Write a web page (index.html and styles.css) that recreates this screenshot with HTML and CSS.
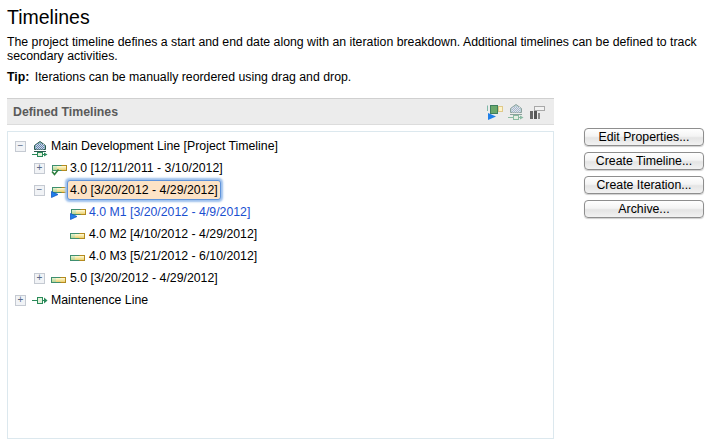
FILE: index.html
```html
<!DOCTYPE html>
<html lang="en">
<head>
<meta charset="utf-8">
<title>Timelines</title>
<link rel="stylesheet" href="styles.css">
</head>
<body>
<svg class="defs" width="0" height="0" aria-hidden="true">
  <defs>
    <linearGradient id="bar" x1="0" y1="0" x2="0" y2="1">
      <stop offset="0" stop-color="#fffbd8"/>
      <stop offset="1" stop-color="#ead070"/>
    </linearGradient>
    <linearGradient id="barg" x1="0" y1="0" x2="0" y2="1">
      <stop offset="0" stop-color="#e8f5da"/>
      <stop offset="1" stop-color="#b4d088"/>
    </linearGradient>
    <symbol id="iter" viewBox="0 0 16 16">
      <rect x="0.5" y="7.5" width="14" height="5" fill="url(#barg)" stroke="#3f8f6f"/>
      <rect x="5" y="8" width="9" height="4" fill="url(#bar)"/>
      <path d="M9.500 7.500H14.500V12.500H9.500" fill="none" stroke="#b98a1c"/>
    </symbol>
    <symbol id="iter-up" viewBox="0 0 16 16">
      <rect x="1.500" y="5.500" width="14" height="5" fill="url(#barg)" stroke="#3f8f6f"/>
      <rect x="6" y="6" width="9" height="4" fill="url(#bar)"/>
      <path d="M10.500 5.500H15.500V10.500H10.500" fill="none" stroke="#b98a1c"/>
    </symbol>
    <symbol id="play" viewBox="0 0 16 16">
      <path d="M0.500 9.500L7 12.500L0.500 15.500Z" fill="#1f7fe8" stroke="#1458c8" stroke-width="0.800"/>
    </symbol>
    <symbol id="check" viewBox="0 0 16 16">
      <path d="M1 11.500L3.500 14.500L7.500 9.500" fill="none" stroke="#2f7f3f" stroke-width="1.600"/>
    </symbol>
    <symbol id="line" viewBox="0 0 16 16">
      <path d="M0 8.500H12" stroke="#2a8a5a" fill="none"/>
      <rect x="5.500" y="5.500" width="5" height="6" fill="#e4f2dc" stroke="#2a8a5a"/>
      <path d="M12 5.500L15.500 8.500L12 11.500Z" fill="#2a8a5a"/>
    </symbol>
    <pattern id="dots" width="2" height="2" patternUnits="userSpaceOnUse">
      <rect width="2" height="2" fill="#5f78c0"/>
      <rect width="1" height="1" fill="#d8e8d8"/>
      <rect x="1" y="1" width="1" height="1" fill="#d8e8d8"/>
    </pattern>
    <symbol id="project" viewBox="0 0 16 16" class="spill">
      <path d="M2.500 4.500L8 0.500L13.500 4.500V8.500H2.500Z" fill="#8fb8c8" stroke="#2f5a50"/>
      <rect x="4" y="3" width="8" height="5.500" fill="url(#dots)"/>
      <path d="M2 10.500H14" stroke="#2f5a50"/>
      <path d="M0 13.500H12" stroke="#2a8a5a"/>
      <rect x="5.500" y="11.500" width="5" height="4" fill="#e4f2dc" stroke="#2a8a5a"/>
      <path d="M12 11.500L15.500 13.500L12 15.500Z" fill="#2a8a5a"/>
    </symbol>
  </defs>
</svg>

<h1 class="title">Timelines</h1>
<p class="intro">The project timeline defines a start and end date along with an iteration breakdown. Additional timelines can be defined to track secondary activities.</p>
<p class="tip"><b class="tip-key">Tip:</b> Iterations can be manually reordered using drag and drop.</p>

<div class="content">
  <section class="panel">
    <header class="panel-head">
      <h2 class="panel-title">Defined Timelines</h2>
      <div class="toolbar">
        <svg class="tool" viewBox="0 0 16 16"><path d="M0.500 1.500V7" stroke="#7fb8a8" fill="none"/><rect x="3.500" y="1.500" width="7" height="8" fill="#6aa86a" stroke="#3f7f5f"/><rect x="11.500" y="2.500" width="4" height="5" fill="#fdf3c8" stroke="#e0c98a"/><path d="M1 9L9 12.500L1 16Z" fill="#1f7fe8"/></svg>
        <svg class="tool faded" viewBox="0 0 16 16"><use href="#project"/></svg>
        <svg class="tool" viewBox="0 0 16 16"><rect x="5.500" y="2.500" width="10" height="4" fill="#f2f2f2" stroke="#a8a8a8"/><rect x="1" y="7" width="3" height="8" fill="#666"/><rect x="5" y="7" width="3" height="8" fill="#555"/><rect x="9" y="9" width="2" height="6" fill="#888"/></svg>
      </div>
    </header>
    <div class="tree">
      <div class="row level-0"><span class="toggle">&minus;</span><svg class="icon"><use href="#project" y="3"/></svg><span class="label">Main Development Line [Project Timeline]</span></div>
      <div class="row level-1"><span class="toggle">+</span><svg class="icon"><use href="#iter-up"/><use href="#check"/></svg><span class="label">3.0 [12/11/2011 - 3/10/2012]</span></div>
      <div class="row level-1"><span class="toggle">&minus;</span><svg class="icon"><use href="#iter-up"/><use href="#play"/></svg><span class="label selected">4.0 [3/20/2012 - 4/29/2012]</span></div>
      <div class="row level-2"><svg class="icon"><use href="#iter-up"/><use href="#play"/></svg><span class="label active">4.0 M1 [3/20/2012 - 4/9/2012]</span></div>
      <div class="row level-2"><svg class="icon"><use href="#iter"/></svg><span class="label">4.0 M2 [4/10/2012 - 4/29/2012]</span></div>
      <div class="row level-2"><svg class="icon"><use href="#iter"/></svg><span class="label">4.0 M3 [5/21/2012 - 6/10/2012]</span></div>
      <div class="row level-1"><span class="toggle">+</span><svg class="icon"><use href="#iter"/></svg><span class="label">5.0 [3/20/2012 - 4/29/2012]</span></div>
      <div class="row level-0"><span class="toggle">+</span><svg class="icon"><use href="#line"/></svg><span class="label">Maintenence Line</span></div>
    </div>
  </section>
  <aside class="actions">
    <button class="btn">Edit Properties...</button>
    <button class="btn">Create Timeline...</button>
    <button class="btn">Create Iteration...</button>
    <button class="btn">Archive...</button>
  </aside>
</div>
</body>
</html>
```
FILE: styles.css
```css
* { box-sizing: border-box; }
html, body { height: 100%; }
body {
  margin: 0;
  padding: 7px 14px 0 7px;
  background: #fff;
  color: #000;
  font-family: "Liberation Sans", Arial, sans-serif;
  font-size: 12.3px;
  overflow: hidden;
}
.defs { position: absolute; }
.spill { overflow: visible; }
.title { margin: 0; font-size: 19.5px; font-weight: 400; line-height: 20px; }
.intro { margin: 8px 0 0; line-height: 14px; }
.tip { margin: 7px 0 0; line-height: 14px; }
.tip-key { margin-right: 2px; }
.content { display: flex; gap: 30px; margin-top: 14px; }
.panel { width: 547px; flex: none; }
.panel-head {
  display: flex;
  align-items: center;
  justify-content: space-between;
  height: 27px;
  padding-right: 9px;
  background: #ececec;
  border-top: 1px solid #d0d0d0;
  border-bottom: 1px solid #dcdcdc;
}
.panel-title { margin: 0 0 0 6px; font-size: 12.3px; font-weight: 700; color: #5a5a5a; }
.toolbar { display: flex; gap: 5px; }
.tool { width: 16px; height: 16px; display: block; overflow: visible; }
.faded { opacity: .5; }
.tree {
  height: 308px;
  margin-top: 6px;
  padding-top: 3px;
  border: 1px solid #dce8ee;
  background: #fff;
}
.row { display: flex; align-items: center; height: 22px; }
.level-0 { padding-left: 7px; }
.level-1 { padding-left: 26px; }
.level-2 { padding-left: 62px; }
.toggle {
  width: 11px;
  height: 11px;
  margin-right: 6px;
  display: flex;
  align-items: center;
  justify-content: center;
  flex: none;
  font-size: 10px;
  line-height: 1;
  color: #5a6a88;
  background: #f1f3f6;
  border: 1px solid #c5cad2;
}
.icon { width: 16px; height: 16px; flex: none; margin-right: 3px; overflow: visible; }
.label { white-space: nowrap; line-height: 16px; }
.selected {
  margin: -3px -2px -3px -3px;
  padding: 1px 2px;
  background: #fde3c6;
  border-radius: 3px;
  border: 1px solid #5f94dc;
  box-shadow: 0 0 2px 1.500px #9dc0ec;
}
.active { color: #1a4fd0; }
.actions { display: flex; flex-direction: column; gap: 6px; width: 120px; margin-top: 30px; }
.btn {
  height: 18px;
  padding: 0;
  font: 12.3px "Liberation Sans", Arial, sans-serif;
  color: #000;
  background: linear-gradient(#ffffff, #f4f4f4 45%, #e4e4e4 55%, #f2f2f2);
  border: 1px solid #8e8e8e;
  border-radius: 4px;
  box-shadow: 0 1px 1px #cfcfcf;
}
```
